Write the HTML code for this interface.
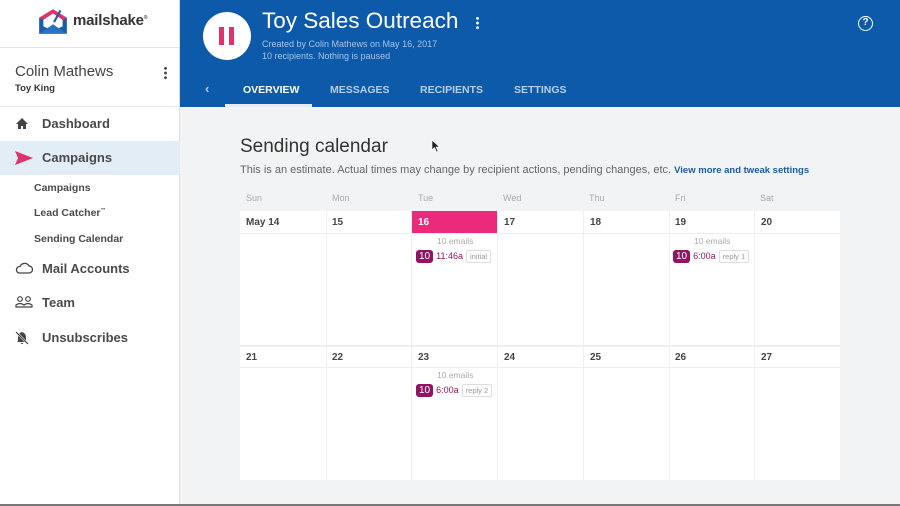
<!DOCTYPE html>
<html><head><meta charset="utf-8"><style>
*{box-sizing:border-box;margin:0;padding:0}
body{width:900px;height:506px;overflow:hidden;font-family:"Liberation Sans",Arial,sans-serif;background:#f2f3f4;position:relative}
.side{position:absolute;left:0;top:0;width:180px;height:506px;background:#fff;border-right:1px solid #ddd}
.logo{height:48px;border-bottom:1px solid #e6e6e6;position:relative}
.logo .t{position:absolute;left:73px;top:12px;font-size:15px;font-weight:bold;color:#333;letter-spacing:-.2px}
.user{height:59px;border-bottom:1px solid #e6e6e6;position:relative}
.nav{position:absolute;left:0;width:180px;height:34px;font-size:13px;font-weight:bold;color:#4a4a4a}
.nav span{position:absolute;left:42px;top:9px}
.nav svg{position:absolute;left:15px;top:10px}
.sub{position:absolute;left:34px;font-size:10.5px;font-weight:bold;color:#4a4a4a}
.head{position:absolute;left:180px;top:0;width:720px;height:107px;background:#0d5aab;color:#fff}
.tab{position:absolute;top:84px;font-size:10.5px;font-weight:bold;color:#b9cfe8}
.cal{position:absolute;left:240px;top:211px;width:600px;height:269px;background:#fff}
.col{position:absolute;top:0;height:269px;border-left:1px solid #f0f0f0}
.dn{position:absolute;font-size:10px;font-weight:bold;color:#444}
.dh{position:absolute;top:193px;font-size:9px;color:#aaa}
.hl{position:absolute;left:0;width:600px;height:1px;background:#eeeeee}
.ev{position:absolute;font-size:9px;color:#8c1a5e;white-space:nowrap}
.ev b{display:inline-block;background:#8f1462;color:#fff;border-radius:3px;padding:1px 3px;font-weight:normal;font-size:10px;margin-right:3px}
.ev i{font-style:normal;display:inline-block;border:1px solid #ddd;color:#999;font-size:7.5px;padding:1px 3px;border-radius:2px;margin-left:3px}
.em{position:absolute;font-size:8.5px;color:#aaa}
</style></head><body>
<div class="side">
 <div class="logo">
  <svg style="position:absolute;left:37px;top:7px" width="32" height="28" viewBox="0 0 30 26"><path d="M2 10 L15 2 L28 10 L28 25 L2 25Z" fill="#1b5ea8"/><path d="M2 10 L15 2 L28 10 L24 12 L15 6 L6 12Z" fill="#e0336c"/><path d="M6 12 L15 6 L24 12 L24 18 L15 22 L6 18Z" fill="#fff"/><path d="M2 25 L15 16 L28 25Z" fill="#2a73c4"/><path d="M16 14 L22 3" stroke="#1b5ea8" stroke-width="2"/></svg>
  <span class="t">mailshake<sup style="font-size:5px">®</sup></span>
 </div>
 <div class="user"></div>
 <div style="position:absolute;left:15px;top:63px;font-size:15px;color:#444">Colin Mathews</div>
 <div style="position:absolute;left:15px;top:83px;font-size:9.5px;font-weight:bold;color:#333">Toy King</div>
 <div style="position:absolute;left:164px;top:66px;width:3px;height:14px;background:radial-gradient(circle,#444 1.3px,transparent 1.5px) 0 0/3px 4.7px"></div>
 <div class="nav" style="top:107px"><svg width="14" height="13" viewBox="0 0 14 13"><path d="M7 1 L13 7 H11 V12 H8 V9 H6 V12 H3 V7 H1Z" fill="#444"/></svg><span>Dashboard</span></div>
 <div class="nav" style="top:141px;background:#e3edf6"><svg width="18" height="14" viewBox="0 0 18 14"><path d="M0 0 L18 7 L0 14 L3 7Z" fill="#e0336c"/></svg><span>Campaigns</span></div>
 <div class="sub" style="top:182px">Campaigns</div>
 <div class="sub" style="top:207px">Lead Catcher<sup style="font-size:5px">™</sup></div>
 <div class="sub" style="top:233px">Sending Calendar</div>
 <div class="nav" style="top:252px"><svg width="18" height="12" viewBox="0 0 18 12"><path d="M4 11 H14 A3.5 3.5 0 0 0 14 4 A5 5 0 0 0 5 4.5 A3.3 3.3 0 0 0 4 11Z" fill="none" stroke="#444" stroke-width="1.3"/></svg><span>Mail Accounts</span></div>
 <div class="nav" style="top:286px"><svg width="18" height="12" viewBox="0 0 18 12"><circle cx="5" cy="3" r="2.3" fill="none" stroke="#444" stroke-width="1.2"/><circle cx="13" cy="3" r="2.3" fill="none" stroke="#444" stroke-width="1.2"/><path d="M1 11 V9 Q5 6 9 9 Q13 6 17 9 V11Z" fill="none" stroke="#444" stroke-width="1.2"/></svg><span>Team</span></div>
 <div class="nav" style="top:321px"><svg width="14" height="14" viewBox="0 0 14 14"><path d="M7 1 Q11 2 11 7 V10 L12 11 H2 L3 10 V7 Q3 2 7 1Z M5.5 12 H8.5 Q7 14 5.5 12Z" fill="#444"/><path d="M1 1 L13 13" stroke="#fff" stroke-width="2.2"/><path d="M1 1 L13 13" stroke="#444" stroke-width="1.2"/></svg><span>Unsubscribes</span></div>
</div>
<div class="head">
 <div style="position:absolute;left:23px;top:12px;width:48px;height:48px;border-radius:50%;background:#fff"></div>
 <div style="position:absolute;left:39px;top:27px;width:5px;height:18px;background:#e0336c"></div>
 <div style="position:absolute;left:49px;top:27px;width:5px;height:18px;background:#e0336c"></div>
 <div style="position:absolute;left:82px;top:8px;font-size:22.5px;color:#fff">Toy Sales Outreach</div>
 <div style="position:absolute;left:296px;top:16px;width:3px;height:14px;background:radial-gradient(circle,#fff 1.3px,transparent 1.5px) 0 0/3px 4.7px"></div>
 <div style="position:absolute;left:82px;top:39px;font-size:9px;color:#a9c4e6;line-height:11.5px">Created by Colin Mathews on May 16, 2017<br>10 recipients. Nothing is paused</div>
 <div style="position:absolute;left:678px;top:16px;width:15px;height:15px;border:1.5px solid #fff;border-radius:50%;font-size:10px;font-weight:bold;text-align:center;line-height:12px">?</div>
 <div class="tab" style="left:25px;font-size:13px;top:81px">‹</div>
 <div class="tab" style="left:63px;color:#fff">OVERVIEW</div>
 <div style="position:absolute;left:45px;top:104px;width:87px;height:3px;background:#e5ecf5"></div>
 <div class="tab" style="left:150px">MESSAGES</div>
 <div class="tab" style="left:240px">RECIPIENTS</div>
 <div class="tab" style="left:334px">SETTINGS</div>
</div>
<div style="position:absolute;left:240px;top:136px;font-size:19px;color:#333">Sending calendar</div>
<div style="position:absolute;left:240px;top:164px;font-size:11px;color:#666">This is an estimate. Actual times may change by recipient actions, pending changes, etc. <span style="color:#1d5aa0;font-weight:bold;font-size:9.5px">View more and tweak settings</span></div>
<svg style="position:absolute;left:431px;top:139px" width="10" height="14" viewBox="0 0 10 14"><path d="M1 1 L1 11 L3.5 8.5 L5.5 13 L7 12.3 L5 8 L8.5 8Z" fill="#222" stroke="#fff" stroke-width=".6"/></svg>
<div class="dh" style="left:246px">Sun</div><div class="dh" style="left:332px">Mon</div><div class="dh" style="left:418px">Tue</div><div class="dh" style="left:503px">Wed</div><div class="dh" style="left:589px">Thu</div><div class="dh" style="left:675px">Fri</div><div class="dh" style="left:760px">Sat</div>
<div class="cal">
 <div class="col" style="left:86px"></div><div class="col" style="left:171px"></div><div class="col" style="left:257px"></div><div class="col" style="left:343px"></div><div class="col" style="left:429px"></div><div class="col" style="left:514px"></div>
 <div class="hl" style="top:22px"></div>
 <div class="hl" style="top:134px;height:2px"></div>
 <div class="hl" style="top:156px"></div>
 <div style="position:absolute;left:172px;top:0;width:85px;height:22px;background:#ec2a7b"></div>
 <div class="dn" style="left:6px;top:6px">May 14</div><div class="dn" style="left:92px;top:6px">15</div><div class="dn" style="left:178px;top:6px;color:#fff">16</div><div class="dn" style="left:264px;top:6px">17</div><div class="dn" style="left:350px;top:6px">18</div><div class="dn" style="left:435px;top:6px">19</div><div class="dn" style="left:521px;top:6px">20</div>
 <div class="dn" style="left:6px;top:141px">21</div><div class="dn" style="left:92px;top:141px">22</div><div class="dn" style="left:178px;top:141px">23</div><div class="dn" style="left:264px;top:141px">24</div><div class="dn" style="left:350px;top:141px">25</div><div class="dn" style="left:435px;top:141px">26</div><div class="dn" style="left:521px;top:141px">27</div>
 <div class="em" style="left:197px;top:25px">10 emails</div>
 <div class="ev" style="left:176px;top:39px"><b>10</b>11:46a<i>initial</i></div>
 <div class="em" style="left:454px;top:25px">10 emails</div>
 <div class="ev" style="left:433px;top:39px"><b>10</b>6:00a<i>reply 1</i></div>
 <div class="em" style="left:197px;top:159px">10 emails</div>
 <div class="ev" style="left:176px;top:173px"><b>10</b>6:00a<i>reply 2</i></div>
</div>
<div style="position:absolute;left:0;top:504px;width:900px;height:2px;background:#777"></div>
</body></html>
